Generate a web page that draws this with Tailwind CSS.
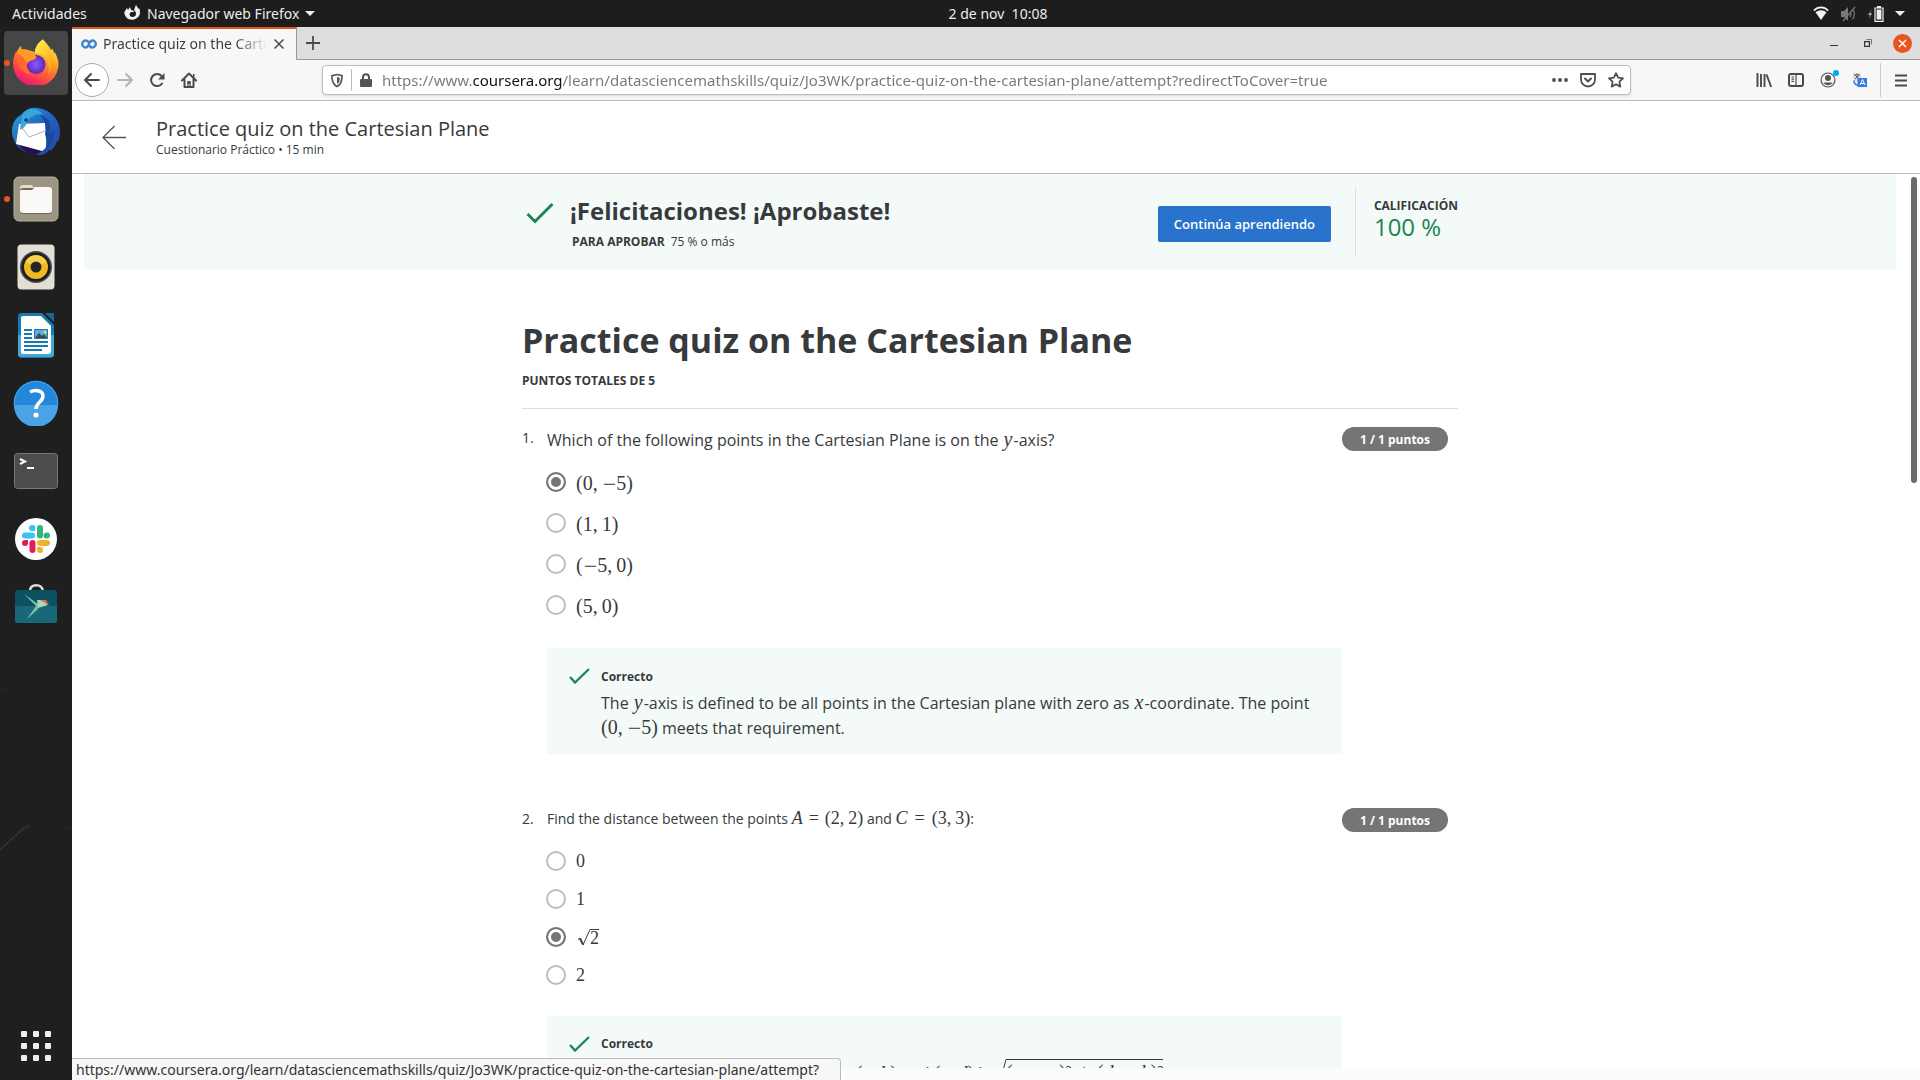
<!DOCTYPE html>
<html lang="es">
<head>
<meta charset="utf-8">
<title>Practice quiz on the Cartesian Plane</title>
<script src="https://cdn.jsdelivr.net/npm/@tailwindcss/browser@4"></script>
</head>
<body class="flex h-screen flex-col overflow-hidden bg-[#1f1f1f] font-['Open_Sans','Noto_Sans',sans-serif] text-[#373a3c]">

<!-- System bar -->
<header class="grid h-[27px] shrink-0 grid-cols-3 items-center bg-[#1d1d1d] font-['Noto_Sans',sans-serif] text-sm text-[#ececec]">
  <div class="flex items-center pl-3">
    <button class="w-[112px] text-left">Actividades</button>
    <button class="flex items-center gap-1.5 whitespace-nowrap">
      <svg class="size-[17px]" viewBox="0 0 17 17"><path fill="#f2f2f2" d="M1 6 3 3l1 2 2-3 1 3c2 0 3 1 3 2H8c-2 0-3 2-2 4 2 2 6 1 6-2 0-2-1-3-2-4 1-2 1-3 2-5 1 2 2 2 2 4l1-1c2 4 1 8-2 10-4 3-9 2-11-1-2-3-2-5-1-6Z"/></svg>
      <span>Navegador web Firefox</span>
      <svg class="h-[5px] w-[10px]" viewBox="0 0 10 5"><path fill="#eee" d="M0 0h10L5 5z"/></svg>
    </button>
  </div>
  <button class="whitespace-pre justify-self-center pl-[76px]">2 de nov  10:08</button>
  <div class="flex items-center justify-end pr-[15px]">
    <svg class="mr-3 h-[15px] w-[16px]" viewBox="0 0 16 15"><path fill="none" stroke="#f2f2f2" stroke-width="1.6" d="M.8 4.600C5 .3 11 .3 15.200 4.600"/><path fill="#f2f2f2" d="M2.500 6.200c3.300-2.700 7.700-2.700 11 0L8 14z"/></svg>
    <svg class="mr-3 h-4 w-[15px]" viewBox="0 0 15 16"><path fill="#777" d="M0 5h3l4-4v14l-4-4H0z"/><path fill="none" stroke="#777" stroke-width="1.200" d="M14 1 2 15M9 5.500c1.300 1 1.300 4 0 5.500M11.500 3.500c2.500 2 2.500 7 0 9.500"/></svg>
    <svg class="mr-[11px] h-[16px] w-[16px]" viewBox="0 0 16 16"><path fill="#aaa" d="M4 3 0 9h2l-1 4 3-6H2z"/><path fill="none" stroke="#f2f2f2" stroke-width="1.200" d="M7 2h8v13.300H7z"/><path fill="#f2f2f2" d="M9 0h4v2H9zM8.600 3.600h4.800v10H8.600z"/></svg>
    <svg class="h-[5px] w-[10px]" viewBox="0 0 10 5"><path fill="#eee" d="M0 0h10L5 5z"/></svg>
  </div>
</header>

<div class="flex min-h-0 flex-1">

<!-- Dock -->
<nav class="relative flex w-[72px] shrink-0 flex-col items-center gap-1 bg-[#1f1f1f] pt-1">
  <svg class="absolute left-0 top-[650px] h-[220px] w-[72px]" viewBox="0 0 72 220"><path fill="none" stroke="#3b322d" stroke-width="1.500" d="M0 173 24 151l5-2"/><path stroke="#30201d" stroke-width="2" d="m64 150 8 1M3 13h6m42 6 3-1"/></svg>
  <button aria-label="Firefox" class="relative flex size-16 items-center justify-center rounded bg-[#464646]">
    <span class="absolute left-0 size-1.5 rounded-full bg-[#e95420]"></span>
    <svg class="mb-[3px] size-[46px]" viewBox="0 0 46 46">
      <defs>
        <linearGradient id="ffa" x1=".8" y1="0" x2=".3" y2="1"><stop offset="0" stop-color="#fff04a"/><stop offset=".3" stop-color="#ffb62a"/><stop offset=".55" stop-color="#ff7132"/><stop offset=".8" stop-color="#ff3750"/><stop offset="1" stop-color="#e31587"/></linearGradient>
        <linearGradient id="ffb" x1=".2" y1="0" x2=".8" y2="1"><stop offset="0" stop-color="#fff04a"/><stop offset="1" stop-color="#ff980e"/></linearGradient>
        <radialGradient id="ffc"><stop offset="0" stop-color="#9059ff"/><stop offset="1" stop-color="#5b2bb8"/></radialGradient>
      </defs>
      <path fill="url(#ffa)" d="M30 .500c2 3 6 6 8 11l1-2c1 2 2 3 2 5l1-1c2 4 3.500 8 3.500 11.500a22.700 22.700 0 0 1-45.400 0C0 19 2 15 3 12l1 2c0-3 2-5 4-7l.500 3.500C11 10 13 10 15 11l7 2c0-5 4-10 8-12.500z"/>
      <path fill="url(#ffb)" d="M30 .500c2 3 6 6 8 11 5 9 3 18-3 24 2-6 1-12-3-17-4-4-10-4-10-5.500 0-5 4-10 8-12.500z"/>
      <circle cx="23" cy="25.500" r="9.500" fill="url(#ffc)"/>
      <path fill="#ff9a24" d="M4 14c0-3 2-5 4-7l.500 3.500C12 9.500 14 11 16 13l7 4c1 3-3 4-6 5-3 2-4 4-4 7-4-3-9-6-9-15z"/>
      <path fill="#ff6a2c" d="M4 15c4 1 7 4 9 7l2 1c-3 5 0 11 6 12-8 2-17-4-17-20z"/>
    </svg>
  </button>
  <button aria-label="Thunderbird" class="flex size-16 items-center justify-center">
    <svg class="size-[48px]" viewBox="0 0 48 48">
      <defs><linearGradient id="tb" x1="0" y1="0" x2="1" y2="1"><stop offset="0" stop-color="#2fa3dc"/><stop offset=".5" stop-color="#1f63bd"/><stop offset="1" stop-color="#2b3fa6"/></linearGradient></defs>
      <path fill="url(#tb)" d="M19 1C33-1 48 9 48 25c0 4-1 7-2 10l-1-1c-1 4-4 8-7 10v-2c-2 3-5 5-8 6C14 49 0 39 0 24 0 17 3 11 9 8c3-4 6-6 10-7z"/>
      <path fill="#26114f" d="M4 34c4 7 10 13 20 14l6-4z"/>
      <path fill="#fff" d="m7 17 26-1 2 24-5 4-26-7z"/><path fill="none" stroke="#aab3bf" d="m8 18 9 12 16-6"/>
      <path fill="#3ba5dd" d="M10 9C15-1 26 1 31 7c-9 0-14 3-16 8-1 4-3 6-7 8z"/><circle cx="14" cy="13" r="1.800" fill="#183a60"/>
      <path fill="#174a9d" d="M28 8c10 3 13 11 8 20 4-2 5-4 6-7 1 9-2 17-10 24 3-6 3-12 1-18 2-7 0-14-5-19z"/>
    </svg>
  </button>
  <button aria-label="Archivos" class="relative flex size-16 items-center justify-center">
    <span class="absolute left-0 size-1.5 rounded-full bg-[#e95420]"></span>
    <svg class="size-[46px]" viewBox="0 0 46 46"><rect x="1" y="1" width="44" height="44" rx="5" fill="#9b9582" stroke="#b5af9d"/><path fill="#e2decd" d="M7 12q0-3 3-3h8l4 3h14v9H7z"/><rect x="7" y="12" width="32" height="26" rx="3" fill="#6e6a5c"/><path fill="#faf9f7" d="M7 15q0-1 1-1h11l3-3h14q3 0 3 3v20q0 3-3 3H10q-3 0-3-3z"/></svg>
  </button>
  <button aria-label="Rhythmbox" class="flex size-16 items-center justify-center">
    <svg class="size-[46px]" viewBox="0 0 46 46"><rect x="4.500" y=".5" width="37" height="45" rx="4" fill="#e4dfd5"/><circle cx="23" cy="23" r="16" fill="#4a4b52"/><circle cx="23" cy="23" r="14.500" fill="#1c1d20"/><circle cx="23" cy="23" r="12" fill="#edba22"/><path fill="#f8d04a" d="m23 23-10.500-5a11.500 11.500 0 0 1 21 0z"/><circle cx="23" cy="23" r="5.500" fill="#25262a"/></svg>
  </button>
  <button aria-label="LibreOffice Writer" class="flex size-16 items-center justify-center">
    <svg class="size-[46px]" viewBox="0 0 46 46"><path fill="#1479b5" d="M8 1h21l12 12v29q0 4-4 4H9q-4 0-4-4V5q0-4 3-4z"/><path fill="#48a5d5" d="M5 23h36v19q0 3-3 3H8q-3 0-3-3z"/><path fill="#fff" d="M10 4h18l10 10v25q0 3-3 3H10q-2 0-2-2V6q0-2 2-2z"/><path fill="#18699a" d="M32 1h9v9z"/><path stroke="#147bb3" stroke-width="2" d="M11 18h8M11 22h8M11 26h8M11 30h24M11 34h24M11 38h18"/><path fill="#55aee0" stroke="#1479b5" d="M21.500 17.500h13v9h-13z"/><path fill="#444" d="m22 26 4-5 3 3 2-2 3 4z"/><circle cx="32" cy="20" r="1.500" fill="#ffd43a"/></svg>
  </button>
  <button aria-label="Ayuda" class="flex size-16 items-center justify-center">
    <svg class="size-[46px]" viewBox="0 0 46 46"><circle cx="23" cy="23" r="22.300" fill="#2387dc"/><path fill="#4ba2e5" d="M1 25h44a22 22 0 0 1-44 0z"/><circle cx="23" cy="23" r="21.700" fill="none" stroke="#4aa5ed"/><path fill="none" stroke="#fff" stroke-width="3.500" d="M17 12c6-3 13-1 13 4 0 6-7 6-7 13"/><circle cx="23" cy="35" r="2.600" fill="#fff"/></svg>
  </button>
  <button aria-label="Terminal" class="flex size-16 items-center justify-center">
    <svg class="size-[46px]" viewBox="0 0 46 46"><rect x="1.500" y="5.500" width="43" height="35" rx="3" fill="#4c4c4c" stroke="#777"/><path fill="none" stroke="#fff" stroke-width="2" d="m7 11 5 2.500L7 16M14 20h7"/></svg>
  </button>
  <button aria-label="Slack" class="flex size-16 items-center justify-center">
    <svg class="size-[42px]" viewBox="0 0 42 42"><circle cx="21" cy="21" r="21" fill="#fff"/><g stroke-width="6" stroke-linecap="round"><path stroke="#36c5f0" d="M10 17.500h7M17 10h.5"/><path stroke="#2eb67d" d="M25 10v7.500M32 17.500h-.5"/><path stroke="#ecb22e" d="M25 25h7M25 32h.1"/><path stroke="#e01e5a" d="M17.500 25v7M10 25h.1"/></g><path fill="#36c5f0" d="M17 10h3v3h-3z"/><path fill="#2eb67d" d="M29 17h3v3h-3z"/><path fill="#ecb22e" d="M22 29h3v3h-3z"/><path fill="#e01e5a" d="M10 22h3v3h-3z"/></svg>
  </button>
  <button aria-label="Snap Store" class="flex size-16 items-center justify-center">
    <svg class="h-[42px] w-[42px]" viewBox="0 4 42 42" overflow="visible"><path fill="none" stroke="#ddd" stroke-width="2.500" d="M15 9.500C14 1 28 1 28 9.500"/><rect y="8" width="42" height="33" rx="3" fill="#0c5162"/><path fill="#19687a" d="M0 24h42v14q0 3-3 3H3q-3 0-3-3z"/><path fill="#7fc3a5" d="m9 12 14 10v5l-11 10 9-13z"/><path fill="#a5d9c1" d="M22 18h5l6 5-10 3z"/><path fill="#f2653c" d="M25 18h6l3 5z"/></svg>
  </button>
  <button aria-label="Mostrar aplicaciones" class="mb-[2px] mt-auto flex size-16 items-center justify-center">
    <svg class="size-[30px]" viewBox="0 0 30 30" fill="#ececec"><rect width="6" height="6" rx="1"/><rect x="12" width="6" height="6" rx="1"/><rect x="24" width="6" height="6" rx="1"/><rect y="12" width="6" height="6" rx="1"/><rect x="12" y="12" width="6" height="6" rx="1"/><rect x="24" y="12" width="6" height="6" rx="1"/><rect y="24" width="6" height="6" rx="1"/><rect x="12" y="24" width="6" height="6" rx="1"/><rect x="24" y="24" width="6" height="6" rx="1"/></svg>
  </button>
</nav>

<!-- Browser window -->
<div class="relative flex min-w-0 flex-1 flex-col bg-white">

  <!-- Tabs -->
  <div class="flex h-[33px] shrink-0 bg-[#dedede] font-['Noto_Sans',sans-serif] text-sm text-[#3a3a3a]">
    <div class="flex w-[225px] items-center border-r border-t-2 border-r-[#999] border-t-[#e95420] bg-[#f7f7f7] pb-0.5 pl-[9px]">
      <svg class="mr-1.5 h-[10px] w-4 shrink-0" viewBox="0 0 16 10"><path fill="none" stroke="#3f86cf" stroke-width="2.400" d="M8.500 4C7 2 6 1.500 4.700 1.500a3.500 3.500 0 0 0 0 7C8 8.500 8 1.500 11.300 1.500a3.500 3.500 0 0 1 0 7C10 8.500 9 8 8 6.500"/></svg>
      <span class="w-[164px] shrink-0 overflow-hidden whitespace-nowrap bg-[linear-gradient(to_right,#3a3a3a_132px,#3a3a3a00_164px)] bg-clip-text text-transparent">Practice quiz on the Cartesian Plane</span>
      <button aria-label="Cerrar pestaña" class="ml-1.5"><svg class="size-3" viewBox="0 0 12 12"><path stroke="#4a4a4a" stroke-width="1.500" d="m1.500 1.500 9 9m0-9-9 9"/></svg></button>
    </div>
    <div class="flex flex-1 items-center border-b border-[#999] pl-[9px] pr-2">
      <button aria-label="Nueva pestaña"><svg class="size-[14px]" viewBox="0 0 14 14"><path stroke="#4a4a4a" stroke-width="1.800" d="M7 0v14M0 7h14"/></svg></button>
      <button aria-label="Minimizar" class="ml-auto mr-[26px]"><svg class="size-2" viewBox="0 0 8 8"><path fill="#333" d="M0 6h8v1H0z"/></svg></button>
      <button aria-label="Restaurar" class="mr-[21px]"><svg class="size-[8px]" viewBox="0 0 8 8"><path fill="none" stroke="#333" stroke-width="1.200" d="M.6 2.600h4.800v4.800H.6z"/><path fill="none" stroke="#777" d="M2.500.500h5v5"/></svg></button>
      <button aria-label="Cerrar"><svg class="size-[19px]" viewBox="0 0 19 19"><circle cx="9.500" cy="9.500" r="9.500" fill="#e95420"/><path stroke="#fff" stroke-width="1.500" d="m6 6 7 7m0-7-7 7"/></svg></button>
    </div>
  </div>

  <!-- Navigation toolbar -->
  <div class="flex h-[41px] shrink-0 items-center border-b border-[#bcbcbc] bg-[#f7f7f7] pl-[3px] pr-[3px]">
    <button aria-label="Atrás" class="flex size-[34px] items-center justify-center rounded-full border border-[#aaa] bg-white"><svg class="size-4" viewBox="0 0 16 16"><path fill="none" stroke="#4a4a4a" stroke-width="2" stroke-linecap="round" stroke-linejoin="round" d="M15 8H1.500M7 2 1 8l6 6"/></svg></button>
    <button aria-label="Adelante" class="flex size-8 items-center justify-center" disabled><svg class="size-4" viewBox="0 0 16 16"><path fill="none" stroke="#b5b5b5" stroke-width="2" stroke-linecap="round" stroke-linejoin="round" d="M1 8h13.500M9 2l6 6-6 6"/></svg></button>
    <button aria-label="Recargar" class="flex size-8 items-center justify-center"><svg class="size-4" viewBox="0 0 16 16"><path fill="none" stroke="#4a4a4a" stroke-width="2" stroke-linecap="round" d="M12.500 4A6 6 0 1 0 13 11.500"/><path fill="#4a4a4a" d="M15.500 1v6.500H9z"/></svg></button>
    <button aria-label="Inicio" class="flex size-8 items-center justify-center"><svg class="size-4" viewBox="0 0 16 16"><path fill="none" stroke="#4a4a4a" stroke-width="2" stroke-linecap="round" stroke-linejoin="round" d="M1 8.500 8 1.500l7 7M3.500 7.500V15h9V7.500"/><path fill="#4a4a4a" d="M6.300 9h3.400v6H8.500v-3h-1v3H6.300zM12 2h1.500v4L12 4.500z"/></svg></button>

    <div class="ml-[117px] mr-[117px] flex h-[30px] min-w-0 flex-1 items-center rounded border border-[#bdbdbd] bg-white pl-2 shadow-sm">
      <svg class="h-[15px] w-3 shrink-0" viewBox="0 0 13 15"><path fill="none" stroke="#555" stroke-width="1.800" d="M6.500 1 12 2.300C12 8 11 12 6.500 14 2 12 1 8 1 2.300z"/><path fill="#555" d="M6.500 3.700 9.500 4.400c0 3.500-.7 5.600-3 7z"/></svg>
      <span class="mx-2 h-[22px] w-px bg-[#bbb]"></span>
      <svg class="h-[14px] w-[12px] shrink-0" viewBox="0 0 12 14"><path fill="none" stroke="#555" stroke-width="2" d="M3 7V4.300a3 3 0 0 1 6 0V7"/><rect y="6" width="12" height="8" rx="1.200" fill="#555"/></svg>
      <input aria-label="Dirección" type="text" value="https://www.coursera.org/learn/datasciencemathskills/quiz/Jo3WK/practice-quiz-on-the-cartesian-plane/attempt?redirectToCover=true" class="ml-[10px] min-w-0 flex-1 bg-[linear-gradient(to_right,#777_90px,#111_90px,#111_180px,#777_180px)] bg-clip-text font-['Noto_Sans',sans-serif] text-[15px] text-transparent outline-none">
      <button aria-label="Acciones" class="flex w-7 justify-center"><svg class="size-4" viewBox="0 0 16 16" fill="#555"><circle cx="2" cy="8" r="2"/><circle cx="8" cy="8" r="2"/><circle cx="14" cy="8" r="2"/></svg></button>
      <button aria-label="Guardar en Pocket" class="flex w-7 justify-center"><svg class="size-4" viewBox="0 0 16 16"><path fill="none" stroke="#4f4f4f" stroke-width="1.800" stroke-linejoin="round" d="M1 2h14v5.500a7 7 0 0 1-14 0z"/><path fill="none" stroke="#4f4f4f" stroke-width="2" stroke-linecap="round" stroke-linejoin="round" d="m5 6.500 3 3 3-3"/></svg></button>
      <button aria-label="Marcador" class="flex w-7 justify-center"><svg class="size-4" viewBox="0 0 16 16"><path fill="none" stroke="#4f4f4f" stroke-width="1.800" stroke-linejoin="round" d="m8 1.200 2.100 4.500 4.900.6-3.600 3.400.9 4.900L8 12.200l-4.300 2.400.9-4.900L1 6.300l4.900-.6z"/></svg></button>
    </div>

    <button aria-label="Catálogo" class="flex size-8 items-center justify-center"><svg class="size-4" viewBox="0 0 16 16"><path stroke="#4a4a4a" stroke-width="1.900" d="M1.500 1v14M5 2v13M8.500 2v13M10.500 2.500 15.200 15"/></svg></button>
    <button aria-label="Barra lateral" class="flex size-8 items-center justify-center"><svg class="size-4" viewBox="0 0 16 16"><rect x="1" y="2" width="14" height="12" rx="2" fill="none" stroke="#4a4a4a" stroke-width="2"/><path stroke="#4a4a4a" stroke-width="1.200" d="M8 2v12M3.500 5H6M3.500 7.200H6M3.500 9.400H6"/></svg></button>
    <button aria-label="Cuenta" class="relative flex size-8 items-center justify-center"><svg class="size-4" viewBox="0 0 16 16"><circle cx="8" cy="8" r="7" fill="none" stroke="#555" stroke-width="1.200"/><circle cx="8" cy="6" r="3" fill="#555"/><path fill="#555" d="M3.300 10.500h9.400A5.500 5.500 0 0 1 3.300 10.500z"/></svg><span class="absolute right-[5px] top-1.5 size-1.5 rounded-full bg-[#00a9f5]"></span></button>
    <button aria-label="Traducir" class="flex size-8 items-center justify-center"><svg class="size-4" viewBox="0 0 16 16"><path fill="#e6e2d8" d="M1 1h8v9H1z"/><path fill="none" stroke="#555" d="M2 3h6M5 1.500V3M3.500 3.500 7 7M7 3.500 3 7"/><path fill="none" stroke="#3b78e7" stroke-width="1.500" d="M2 8.500c0 3 1 4.500 4 4.500"/><path fill="#3b78e7" d="M5.500 6H15v9H5.500z"/><path fill="none" stroke="#fff" d="m8 13 2.500-5.500L13 13M9 11.500h3"/></svg></button>
    <span class="mx-[4px] h-[34px] w-px bg-[#ccc]"></span>
    <button aria-label="Menú" class="flex size-8 items-center justify-center"><svg class="h-[13px] w-3" viewBox="0 0 12 13"><path stroke="#4a4a4a" stroke-width="2" d="M0 1.500h12M0 6.500h12M0 11.500h12"/></svg></button>
  </div>

  <!-- Course header -->
  <div class="flex h-[73px] shrink-0 items-center border-b border-[#b9bdbd] bg-white pl-[30px]">
    <a href="#" aria-label="Volver" class="mr-[30px]"><svg class="size-6" viewBox="0 0 24 24"><path fill="none" stroke="#555" stroke-width="1.300" d="M24 12.500H1M12.500 1 1 12.500 12.500 24"/></svg></a>
    <div class="pb-px">
      <h2 class="mb-px text-xl leading-[26px]">Practice quiz on the Cartesian Plane</h2>
      <p class="text-xs leading-[14px]">Cuestionario Práctico • 15 min</p>
    </div>
  </div>

  <!-- Scrolling content -->
  <main class="relative min-h-0 flex-1 overflow-hidden px-3 pr-6">
    <span class="absolute right-[3px] top-[3px] h-[306px] w-1.5 rounded-full bg-[#6b6b6b]"></span>

    <section class="bg-[#f3faf8]">
      <div class="mx-auto flex h-24 max-w-[936px] items-start">
        <svg class="ml-1 mt-[28px] h-[22px] w-[28px]" viewBox="0 0 28 22"><path fill="none" stroke="#1f8354" stroke-width="3" d="m1.500 12 7.500 7.500L26.500 2"/></svg>
        <div class="ml-4 mt-[21px]">
          <h2 class="text-2xl font-bold leading-8">¡Felicitaciones! ¡Aprobaste!</h2>
          <p class="ml-0.5 mt-[6px] text-xs leading-[18px]"><strong class="mr-1.5">PARA APROBAR</strong>75 % o más</p>
        </div>
        <button class="ml-auto mt-8 h-9 w-[173px] rounded-[2px] bg-[#2a73cc] pt-px text-[13px] font-semibold text-white">Continúa aprendiendo</button>
        <div class="ml-6 mt-[14px] h-[68px] border-l border-[#dcdfdf] pl-[18px] pt-[9px]">
          <h3 class="text-xs font-bold leading-[18px]">CALIFICACIÓN</h3>
          <p class="text-2xl leading-6 text-[#1f8354]">100 %</p>
        </div>
      </div>
    </section>

    <div class="mx-auto max-w-[936px]">
      <h1 class="pt-[48px] text-[34px] font-bold leading-[44px]">Practice quiz on the Cartesian Plane</h1>
      <p class="mt-[10px] h-[37px] border-b border-[#dcdcdc] text-xs font-bold leading-[18px]">PUNTOS TOTALES DE 5</p>

      <fieldset class="mt-[18px] flex items-start">
        <span class="w-[25px] text-sm leading-[22px]">1.</span>
        <div class="min-w-0 flex-1">
          <p class="pt-px text-base leading-6">Which of the following points in the Cartesian Plane is on the <i class="mx-px font-['Liberation_Serif',serif] text-[20px] leading-none">y</i>-axis?</p>
          <div class="mt-[9px] font-['Liberation_Serif',serif] text-[20px]">
            <label class="flex h-[41px] items-center"><input type="radio" name="q1" checked class="mr-[10px] -ml-px size-5 appearance-none rounded-full border-2 border-[#bdbdbd] checked:border-[#757575] checked:bg-[#757575] checked:shadow-[inset_0_0_0_3px_white]"><span class="pt-0.5 leading-6">(0,<span class="ml-[5px] align-[-2px] text-[24px] leading-[0px]">−</span>5)</span></label>
            <label class="flex h-[41px] items-center"><input type="radio" name="q1" class="mr-[10px] -ml-px size-5 appearance-none rounded-full border-2 border-[#bdbdbd]"><span class="pt-0.5 leading-6">(1,<span class="ml-[4px]">1</span>)</span></label>
            <label class="flex h-[41px] items-center"><input type="radio" name="q1" class="mr-[10px] -ml-px size-5 appearance-none rounded-full border-2 border-[#bdbdbd]"><span class="pt-0.5 leading-6">(<span class="ml-px align-[-2px] text-[24px] leading-[0px]">−</span>5,<span class="ml-[4px]">0</span>)</span></label>
            <label class="flex h-[41px] items-center"><input type="radio" name="q1" class="mr-[10px] -ml-px size-5 appearance-none rounded-full border-2 border-[#bdbdbd]"><span class="pt-0.5 leading-6">(5,<span class="ml-[4px]">0</span>)</span></label>
          </div>
          <div class="mt-[23px] flex bg-[#f3faf8] pb-[13px] pl-[22px] pr-5 pt-[17px]">
            <svg class="mr-[11px] mt-[3px] h-4 w-[21px] shrink-0" viewBox="0 0 21 16"><path fill="none" stroke="#1f8354" stroke-width="2.300" d="M1 9l5 5.500L20 1"/></svg>
            <div>
              <h4 class="mb-[2px] text-xs font-bold leading-6">Correcto</h4>
              <p class="text-base leading-[25px]">The <i class="mx-px font-['Liberation_Serif',serif] text-[20px] leading-none">y</i>-axis is defined to be all points in the Cartesian plane with zero as <i class="mx-px font-['Liberation_Serif',serif] text-[20px] leading-none">x</i>-coordinate. The point <span class="whitespace-nowrap font-['Liberation_Serif',serif] text-[20px] leading-none">(0,<span class="ml-[5px] align-[-2px] text-[24px] leading-[0px]">−</span>5)</span> meets that requirement.</p>
            </div>
          </div>
        </div>
        <span class="mr-[10px] w-[106px] rounded-full bg-[#757575] pt-px text-center text-xs font-bold leading-[23px] text-white">1 / 1 puntos</span>
      </fieldset>

      <fieldset class="mt-[54px] flex items-start">
        <span class="w-[25px] text-sm leading-[22px]">2.</span>
        <div class="min-w-0 flex-1">
          <p class="text-sm leading-[22px]">Find the distance between the points <span class="font-['Liberation_Serif',serif] text-[18px] leading-none"><i>A</i><span class="mx-[6px]">=</span>(2,<span class="ml-[4px]">2</span>)</span> and <span class="font-['Liberation_Serif',serif] text-[18px] leading-none"><i>C</i><span class="mx-[7px]">=</span>(3,<span class="ml-[4px]">3</span>)</span>:</p>
          <div class="mt-[12px] font-['Liberation_Serif',serif] text-[18px]">
            <label class="flex h-[38px] items-center"><input type="radio" name="q2" class="mr-[10px] -ml-px size-5 appearance-none rounded-full border-2 border-[#bdbdbd]">0</label>
            <label class="flex h-[38px] items-center"><input type="radio" name="q2" class="mr-[10px] -ml-px size-5 appearance-none rounded-full border-2 border-[#bdbdbd]">1</label>
            <label class="flex h-[38px] items-center"><input type="radio" name="q2" checked class="mr-[10px] -ml-px size-5 appearance-none rounded-full border-2 border-[#bdbdbd] checked:border-[#757575] checked:bg-[#757575] checked:shadow-[inset_0_0_0_3px_white]"><svg class="ml-0.5 h-[17px] w-3" viewBox="0 0 12 17"><path fill="none" stroke="#373a3c" d="M0 10.500 2 9l3 7L12 .5"/><path stroke="#373a3c" stroke-width="1.800" d="m2 9.500 3 6"/></svg><span class="h-[17px] border-t border-[#373a3c] leading-[17px]">2</span></label>
            <label class="flex h-[38px] items-center"><input type="radio" name="q2" class="mr-[10px] -ml-px size-5 appearance-none rounded-full border-2 border-[#bdbdbd]">2</label>
          </div>
          <div class="mt-[22px] flex bg-[#f3faf8] pb-[14px] pl-[22px] pr-5 pt-4">
            <svg class="mr-[11px] mt-1 h-4 w-[21px] shrink-0" viewBox="0 0 21 16"><path fill="none" stroke="#1f8354" stroke-width="2.300" d="M1 9l5 5.500L20 1"/></svg>
            <div>
              <h4 class="text-xs font-bold leading-6">Correcto</h4>
              <p class="flex h-[33px] items-center whitespace-pre text-base">The distance between the points <span class="ml-2 font-['Liberation_Serif',serif] text-[20px]">(<i>a</i>,<i class="ml-[3px]">b</i>)</span> and <span class="font-['Liberation_Serif',serif] text-[20px]">(<i>c</i>,<i class="ml-[3px]">d</i>)</span> is <svg class="h-7 w-3" viewBox="0 0 12 28"><path fill="none" stroke="#373a3c" d="m0 16 2-3 3 14L12 .5"/></svg><span class="h-7 border-t border-[#373a3c] font-['Liberation_Serif',serif] text-[20px] leading-6">(<i>c</i><span class="mx-[8px]">−</span><i>a</i>)²<span class="mx-[7px]">+</span>(<i>d</i><span class="mx-[8px]">−</span><i>b</i>)²</span></p>
            </div>
          </div>
        </div>
        <span class="mr-[10px] w-[106px] rounded-full bg-[#757575] pt-px text-center text-xs font-bold leading-[23px] text-white">1 / 1 puntos</span>
      </fieldset>
    </div>
  </main>
  <div class="h-3 shrink-0 bg-[#fcfcfc]"></div>

  <!-- Link status -->
  <div class="absolute bottom-0 left-0 h-[22px] w-[769px] whitespace-nowrap rounded-tr border-r border-t border-[#bbb] bg-[#f7f7f7] px-1 font-['Noto_Sans',sans-serif] text-sm leading-[21px] text-[#333]">https://www.coursera.org/learn/datasciencemathskills/quiz/Jo3WK/practice-quiz-on-the-cartesian-plane/attempt?</div>
</div>
</div>
</body>
</html>
